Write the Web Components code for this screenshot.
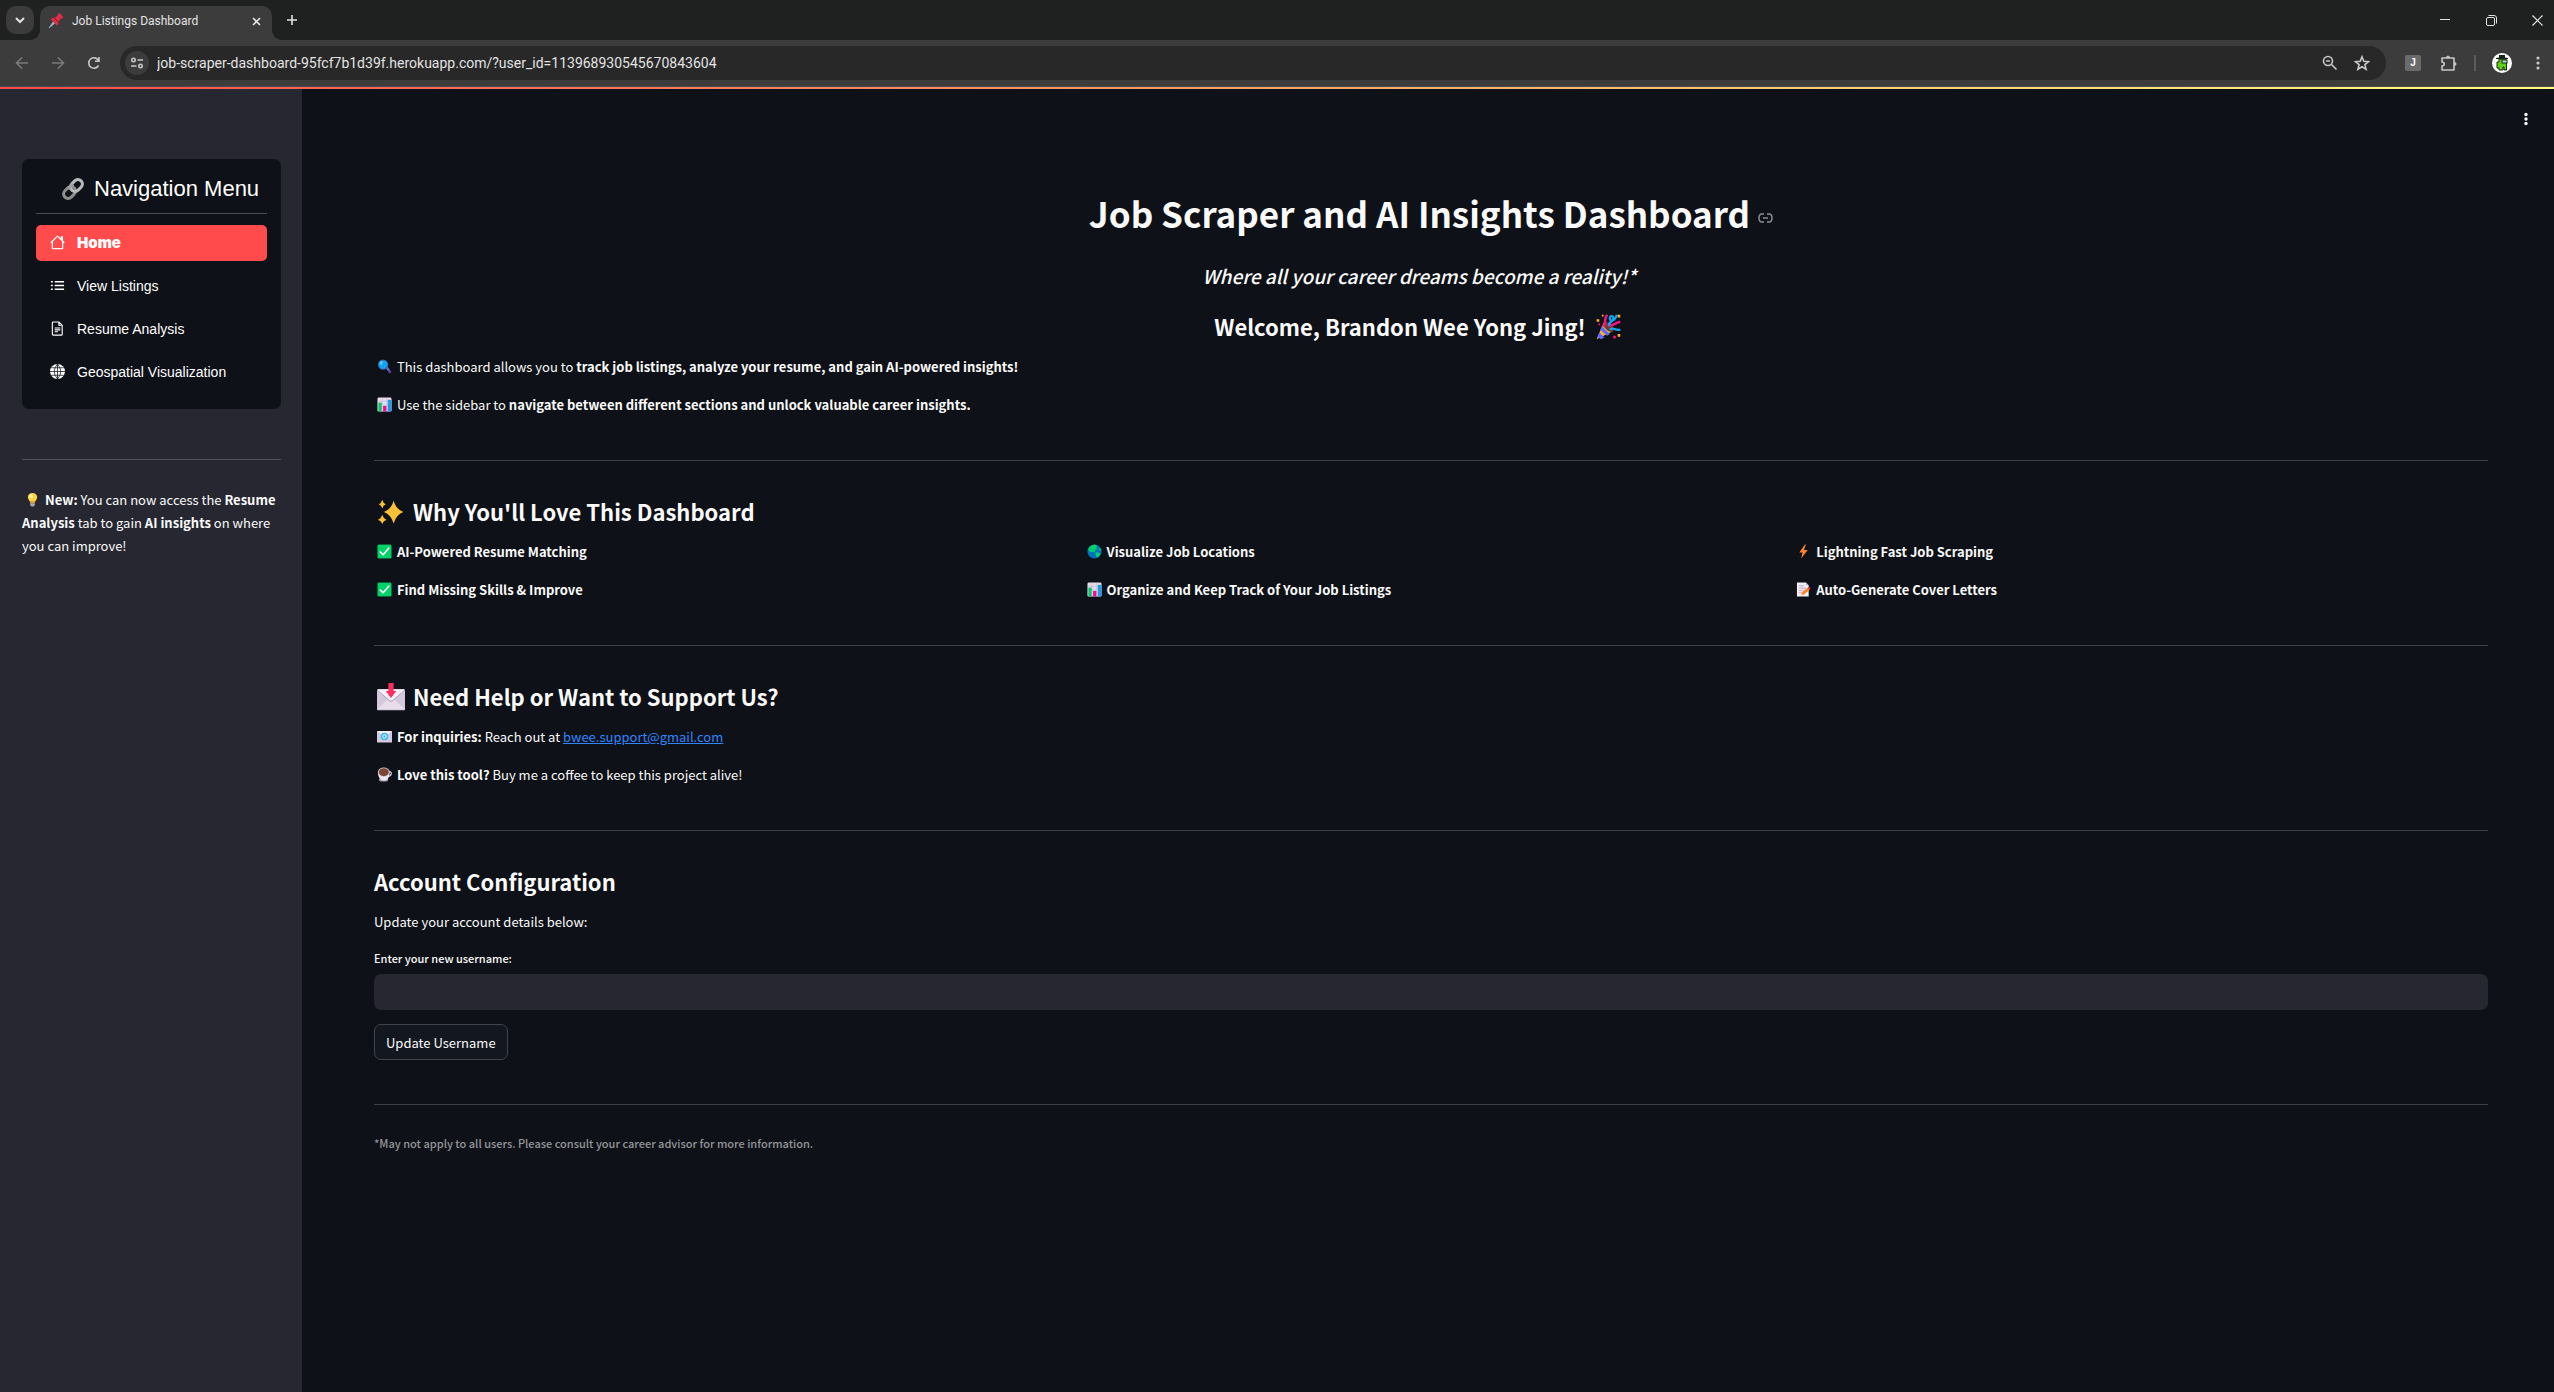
<!DOCTYPE html>
<html lang="en">
<head>
<meta charset="utf-8">
<title>Job Listings Dashboard</title>
<style>
html, body { margin: 0; height: 100%; }
body {
  background: #0e1117; color: #fafafa;
  font: 400 13px/23px "Noto Sans CJK SC", "Noto Sans", sans-serif;
  --ui: Roboto, "Noto Sans", sans-serif;
  --panel: #262730; --ink: #0e1117; --accent: #ff4b4b;
}
app-shell a { color: #2f86ff; }
</style>
</head>
<body>
<app-shell>
  <browser-tabs slot="chrome" label="Job Listings Dashboard"></browser-tabs>
  <browser-toolbar slot="chrome" url="job-scraper-dashboard-95fcf7b1d39f.herokuapp.com/?user_id=113968930545670843604"></browser-toolbar>

  <side-bar slot="side">
    <nav-menu slot="menu" label="Navigation Menu">
      <nav-item icon="house" active>Home</nav-item>
      <nav-item icon="list">View Listings</nav-item>
      <nav-item icon="file">Resume Analysis</nav-item>
      <nav-item icon="globe">Geospatial Visualization</nav-item>
    </nav-menu>
    <emoji-icon name="bulb"></emoji-icon> <b>New:</b> You can now access the <b>Resume Analysis</b> tab to gain <b>AI insights</b> on where you can improve!
  </side-bar>

  <hero-head>
    <span slot="title">Job Scraper and AI Insights Dashboard</span>
    <span slot="tagline">Where all your career dreams become a reality!*</span>
    <span slot="welcome">Welcome, Brandon Wee Yong Jing! <emoji-icon name="party" size="l"></emoji-icon></span>
    <text-line><emoji-icon name="lens"></emoji-icon> This dashboard allows you to <b>track job listings, analyze your resume, and gain AI-powered insights!</b></text-line>
    <text-line><emoji-icon name="chart"></emoji-icon> Use the sidebar to <b>navigate between different sections and unlock valuable career insights.</b></text-line>
  </hero-head>

  <page-section>
    <span slot="title"><emoji-icon name="sparkles" size="l"></emoji-icon> Why You'll Love This Dashboard</span>
    <feature-grid>
      <text-line><emoji-icon name="check"></emoji-icon> <b>AI-Powered Resume Matching</b></text-line>
      <text-line><emoji-icon name="earth"></emoji-icon> <b>Visualize Job Locations</b></text-line>
      <text-line><emoji-icon name="bolt"></emoji-icon> <b>Lightning Fast Job Scraping</b></text-line>
      <text-line><emoji-icon name="check"></emoji-icon> <b>Find Missing Skills &amp; Improve</b></text-line>
      <text-line><emoji-icon name="chart"></emoji-icon> <b>Organize and Keep Track of Your Job Listings</b></text-line>
      <text-line><emoji-icon name="memo"></emoji-icon> <b>Auto-Generate Cover Letters</b></text-line>
    </feature-grid>
  </page-section>

  <page-section>
    <span slot="title"><emoji-icon name="inbox" size="l"></emoji-icon> Need Help or Want to Support Us?</span>
    <text-line><emoji-icon name="email"></emoji-icon> <b>For inquiries:</b> Reach out at <a href="mailto:bwee.support@gmail.com">bwee.support@gmail.com</a></text-line>
    <text-line><emoji-icon name="coffee"></emoji-icon> <b>Love this tool?</b> Buy me a coffee to keep this project alive!</text-line>
  </page-section>

  <page-section>
    <span slot="title">Account Configuration</span>
    <text-line>Update your account details below:</text-line>
    <username-form></username-form>
  </page-section>

  <page-footnote>*May not apply to all users. Please consult your career advisor for more information.</page-footnote>
</app-shell>

<script>
const define = (name, render) => customElements.define(name, class extends HTMLElement {
  constructor() { super(); this.attachShadow({ mode: "open" }); }
  connectedCallback() { this.shadowRoot.innerHTML = render(this); }
});

const EMOJI = {
  bulb: `<path d="M16 2c-6 0-10 4-10 9 0 4 3 6 4.500 10h11c1.500-4 4.500-6 4.500-10 0-5-4-9-10-9z" fill="#ffd23f"/><ellipse cx="13" cy="9" rx="4" ry="5" fill="#fff0a0"/><path d="M11 21h10v3H11z" fill="#f0a33a"/><path d="M11 24h10v4l-3 3h-4l-3-3z" fill="#a9a7b5"/>`,
  party: `<path d="M3 30 11 11c5 1 9 5 10 10z" fill="#ffb02e"/><path d="m6 22 6 6-4 2-4-3zM9 15l9 9-3 2-8-7z" fill="#5a6cff"/><ellipse cx="17" cy="16" rx="7" ry="4" transform="rotate(45 17 16)" fill="#6b3a2c"/><path d="M11 16c3-4 0-9 4-14M17 14c5 1 7-3 13-4" fill="none" stroke="#f5117e" stroke-width="3"/><path d="M17 15c-1-5 4-4 5-8s-4-5-4-1 6 4 8-4M18 19c4-4 6 2 12 0" fill="none" stroke="#12a5f4" stroke-width="2.600"/><path d="M3 7h3v3H3zM27 24h3v3h-3zM27 2h3v3h-3zM9 2h2v2H9z" fill="#ffb02e"/><path d="M5 12h2v2H5zM22 26h3v3h-3z" fill="#f5117e"/>`,
  lens: `<path d="m19 20 4-3 7 9c2 3-3 6-5 3z" fill="#534ba4"/><path d="m20 19 3-2 4 6-4 2z" fill="#8368b5"/><circle cx="13" cy="12" r="11" fill="#2c6db5"/><circle cx="13" cy="12" r="9" fill="#10a5f4"/><ellipse cx="9" cy="8" rx="3" ry="4" fill="#6bd0ff"/>`,
  chart: `<rect x="1" y="1" width="30" height="30" rx="3" fill="#e6dcea"/><path d="M1 9h30M1 17h30M1 24h30M11 1v30M21 1v30" stroke="#bba9c9" stroke-width="1"/><path d="M3 12h7v19H3z" fill="#00c868"/><path d="M13 19h7v12h-7z" fill="#f70a8d"/><path d="M23 6h7v25h-7z" fill="#14a0f0"/>`,
  sparkles: `<path d="M19 3q3 10 11 13-8 3-11 13-3-10-11-13 8-3 11-13zM6 2q1 4 4 5-3 1-4 5-1-4-4-5 3-1 4-5zM6 19q1 4 5 6-4 1-5 5-1-4-5-5 4-2 5-6z" fill="#fbc136"/>`,
  check: `<rect x="1" y="1" width="30" height="30" rx="3" fill="#06b85b"/><rect x="2" y="2" width="28" height="28" rx="2" fill="#00d26a"/><path d="m7 17 6 6L25 9" fill="none" stroke="#fff" stroke-width="3.500" stroke-linecap="round" stroke-linejoin="round"/>`,
  earth: `<circle cx="16" cy="16" r="15" fill="#0074ba"/><path d="M8 4c7-4 12-2 14 1l-3 2 3 3-5 4-1 4-5-2-5 1-3-5c0-3 2-6 5-8zM18 18l7 0 4 3c-2 4-5 7-8 8l-2-6zM25 8l4 2 1 5-4-3z" fill="#00d26a"/>`,
  bolt: `<path d="M19 1 7 18h7l-3 13 14-18h-8l4-12z" fill="#ff822d"/>`,
  memo: `<path d="M2 1h19l6 6v24H2z" fill="#f3eef8"/><path d="M21 1v6h6z" fill="#c0aed1"/><path d="M6 8h11M6 13h16M6 18h8M6 23h4" stroke="#b4a5c4" stroke-width="2"/><path d="m10 28 2-6 13-10 4 5-13 10z" fill="#ff822d"/><path d="m25 12 2-1c2-1 5 3 3 4l-2 2z" fill="#f8312f"/><path d="m10 28 2-5 3 4z" fill="#ffce7c"/>`,
  inbox: `<rect x="0" y="7" width="32" height="24" rx="1" fill="#d3c8dc"/><path d="m0 30 13-12h6l13 12z" fill="#e6dcea"/><path d="M1 7h30v3L18 20c-1 1-3 1-4 0L1 10z" fill="#f4eff8"/><path d="m0 8 14 12c1 1 3 1 4 0L32 8" fill="none" stroke="#998ea4" stroke-width="1"/><path d="M13 0h6v9h3l-6 8-6-8h3z" fill="#f92f60"/>`,
  email: `<rect y="4" width="32" height="25" rx="1" fill="#d5cadd"/><path d="M1 4h30L18 17c-1 1-3 1-4 0z" fill="#f4eff8"/><circle cx="16" cy="16" r="8" fill="#26b5f3"/><circle cx="16" cy="16" r="3" fill="none" stroke="#fff" stroke-width="1.500"/><path d="M19 14v4c1 2 3 0 2-3a5 5 0 1 0-3 6" fill="none" stroke="#fff" stroke-width="1"/>`,
  coffee: `<ellipse cx="14" cy="27" rx="10" ry="4" fill="#a99bb3"/><path d="M26 10c7-1 6 10-3 10" fill="none" stroke="#d9d2df" stroke-width="2.500"/><path d="M2 10h25c0 12-4 19-12 19S2 22 2 10z" fill="#ece7f0"/><ellipse cx="14.500" cy="11" rx="12.500" ry="10" fill="#d3c9da"/><ellipse cx="14.500" cy="11" rx="10.500" ry="8.500" fill="#7d4533"/>`,
  chain: `<g fill="none" stroke-width="4.500"><rect x="-9.500" y="-6.500" width="19" height="13" rx="6.500" transform="translate(11 21) rotate(-45)" stroke="#8e8e8e"/><rect x="-9.500" y="-6.500" width="19" height="13" rx="6.500" transform="translate(21 11) rotate(-45)" stroke="#b9b9b9"/><path d="m9 16 7-7" stroke="#a2a2a2"/></g>`,
  pin: `<path d="m2 30 8-12 3 3z" fill="#9fb3c8" stroke="#9fb3c8" stroke-width="1.500"/><path d="M20 1c3-2 11 5 10 9l-4 1-5 6c1 4-1 7-3 8L6 13c1-3 4-4 8-3l6-6z" fill="#dd2e44"/><path d="m13 11 8 7" stroke="#a0041e" stroke-width="2"/>`
};
define("emoji-icon", el => `
<style>
:host { display: inline-block; width: 15px; height: 15px; margin: 0 2px 0 3px; vertical-align: -2px; }
:host([size="l"]) { width: 28px; height: 28px; margin: 0 3px; vertical-align: -5px; }
:host([size="s"]) { width: 16px; height: 16px; margin: 0; vertical-align: middle; }
:host([size="m"]) { width: 22px; height: 22px; margin: 0; }
svg { display: block; width: 100%; height: 100%; overflow: visible; }
</style>
<svg viewBox="0 0 32 32" aria-hidden="true">${EMOJI[el.getAttribute("name")]}</svg>`);

define("app-shell", () => `
<style>
:host { display: flex; flex-direction: column; min-height: 100vh; }
.accent { height: 2px; background: linear-gradient(90deg, #ff4b4b, #fffd80); }
.body { display: flex; flex: 1; }
main { flex: 1; min-width: 0; box-sizing: border-box; padding: 22px 66px 60px 72px; }
.bar { display: flex; justify-content: flex-end; align-items: flex-start; height: 78px; margin-right: -48px; }
.bar button { width: 20px; height: 16px; padding: 0; border: 0; background: none; }
svg { display: block; margin: 0 auto; fill: #fafafa; }
</style>
<header><slot name="chrome"></slot></header>
<div class="accent"></div>
<div class="body">
  <slot name="side"></slot>
  <main>
    <div class="bar"><button aria-label="Main menu"><svg width="4" height="16"><circle cx="2" cy="3.500" r="1.700"/><circle cx="2" cy="8" r="1.700"/><circle cx="2" cy="12.500" r="1.700"/></svg></button></div>
    <slot></slot>
  </main>
</div>`);

define("browser-tabs", el => `
<style>
:host { display: flex; align-items: center; justify-content: space-between; box-sizing: border-box; height: 40px; padding: 0 6px; background: #1f2020; font: 12px/16px var(--ui); color: #e3e3e3; }
.left { display: flex; align-items: flex-end; align-self: stretch; }
button { display: grid; place-items: center; padding: 0; border: 0; background: none; color: inherit; }
.search { width: 28px; height: 28px; margin: 6px 6px 6px 0; border-radius: 10px; background: #3c3c3c; }
.tab { position: relative; display: flex; align-items: center; gap: 8px; box-sizing: border-box; width: 232px; height: 34px; padding: 0 8px 4px; border-radius: 10px 10px 0 0; background: #3c3c3c; }
.tab::before, .tab::after { content: ""; position: absolute; bottom: 0; width: 10px; height: 10px; }
.tab::before { right: 100%; background: radial-gradient(circle at 0 0, #0000 10px, #3c3c3c 10px); }
.tab::after { left: 100%; background: radial-gradient(circle at 100% 0, #0000 10px, #3c3c3c 10px); }
.tab span { flex: 1; white-space: nowrap; }
.tab button { width: 16px; height: 16px; }
.add { width: 28px; height: 28px; margin: 0 0 6px 6px; }
.win { display: flex; margin-right: -12px; }
.win button { width: 46px; height: 38px; }
svg { fill: none; stroke: currentColor; }
</style>
<div class="left">
  <button class="search" aria-label="Search tabs"><svg width="10" height="8" stroke-width="2"><path d="m1 2 4 4 4-4"/></svg></button>
  <div class="tab"><emoji-icon name="pin" size="s"></emoji-icon><span>${el.getAttribute("label")}</span>
    <button aria-label="Close tab"><svg width="9" height="9" stroke-width="1.600"><path d="m1 1 7 7m0-7L1 8"/></svg></button></div>
  <button class="add" aria-label="New tab"><svg width="12" height="12" stroke-width="1.600"><path d="M6 1v10M1 6h10"/></svg></button>
</div>
<div class="win">
  <button aria-label="Minimize"><svg width="10" height="10"><path d="M0 4.500h10"/></svg></button>
  <button aria-label="Restore"><svg width="11" height="11"><rect x=".5" y="2.500" width="8" height="8" rx="1.500"/><path d="M2.500.5H8Q10.500.5 10.500 3v5.500"/></svg></button>
  <button aria-label="Close"><svg width="11" height="11" stroke-width="1.200"><path d="m.5.500 10 10m0-10-10 10"/></svg></button>
</div>`);

define("browser-toolbar", el => `
<style>
:host { display: flex; align-items: center; box-sizing: border-box; height: 47px; padding: 0 0 1px 4px; background: #3c3c3c; border-bottom: 1px solid #4a4a4a; color: #c7c7c7; }
button { display: grid; place-items: center; width: 36px; height: 34px; padding: 0; border: 0; background: none; color: inherit; }
button[disabled] { color: #7a7a7a; }
.url { display: flex; align-items: center; flex: 1; box-sizing: border-box; height: 34px; margin: 0 9px 0 8px; padding: 0 8px 0 5px; border-radius: 17px; background: #282828; }
.url .site { width: 24px; height: 24px; border-radius: 12px; background: #3c3c3c; }
.url button { width: 32px; }
input { flex: 1; margin: 0 0 0 8px; padding: 0; border: 0; outline: 0; font: 14px/20px var(--ui); color: #e3e3e3; background: none; }
.j { display: grid; place-items: center; width: 16px; height: 16px; border-radius: 2px; background: #6b6b6b; color: #fff; font: 700 10px/16px "Liberation Sans", sans-serif; }
hr { width: 2px; height: 16px; margin: 0 6px 0 7px; border: 0; background: #5c5c5c; }
.profile { width: 40px; }
.menu { width: 32px; }
svg { fill: none; stroke: currentColor; stroke-width: 1.600; }
.dots { fill: currentColor; stroke: none; }
</style>
<button disabled aria-label="Back"><svg width="14" height="14"><path d="M13 7H2m5-5.500L1.500 7 7 12.500"/></svg></button>
<button disabled aria-label="Forward"><svg width="14" height="14"><path d="M1 7h11M7 1.500 12.500 7 7 12.500"/></svg></button>
<button aria-label="Reload"><svg width="14" height="14" stroke-width="1.800"><path d="M11.500 9.500a5.200 5.200 0 1 1 0-5M12 1v4.200H8"/></svg></button>
<div class="url">
  <button class="site" aria-label="Site information"><svg width="14" height="12"><circle cx="3.500" cy="3" r="1.700"/><path d="M7.500 3H13M1 9h5.500"/><circle cx="10.500" cy="9" r="1.700"/></svg></button>
  <input aria-label="Address" value="${el.getAttribute("url")}">
  <button aria-label="Zoom"><svg width="16" height="16"><circle cx="6" cy="6" r="4.500"/><path d="m9.500 9.500 5 5M4 6h4"/></svg></button>
  <button aria-label="Bookmark"><svg width="16" height="16" stroke-width="1.500"><path d="m8 1.800 1.800 4.400 4.700.4-3.600 3 1.200 4.600L8 11.700l-4.100 2.500 1.200-4.600-3.600-3 4.700-.4z"/></svg></button>
</div>
<button aria-label="Extension J"><span class="j">J</span></button>
<button aria-label="Extensions"><svg width="18" height="18"><path d="M2 4h12v12H2v-4q2.300-.3 2.300-2T2 8z" stroke-linejoin="round"/><path d="M6 4a2 2.500 0 0 1 4 0zM14 8a2.500 2 0 0 1 0 4z" fill="currentColor" stroke="none"/></svg></button>
<hr>
<button class="profile" aria-label="Profile"><svg width="20" height="20"><circle cx="10" cy="10" r="10" fill="#fff" stroke="none"/><path d="M7 6h6q1.500 0 1.500 2v9H12v-3h-1v3H7v-2H5V9h2z" fill="#5fd013" stroke="#182b0c" stroke-width="1"/><rect x="10" y="7" width="5" height="3" fill="#b9dce0" stroke="#182b0c" stroke-width="1"/><path d="M4 6h12V5l-3-.5V2H7v2.500L4 5z" fill="#14251a" stroke="none"/></svg></button>
<button class="menu" aria-label="Browser menu"><svg class="dots" width="4" height="14"><circle cx="2" cy="2" r="1.600"/><circle cx="2" cy="7" r="1.600"/><circle cx="2" cy="12" r="1.600"/></svg></button>`);

define("side-bar", () => `
<style>
:host { display: block; flex: none; box-sizing: border-box; width: 302px; padding: 70px 21px 40px 22px; background: var(--panel); }
hr { height: 1px; margin: 50px 0 28px; border: 0; background: #51525a; }
</style>
<slot name="menu"></slot><hr><div><slot></slot></div>`);

define("nav-menu", el => `
<style>
:host { display: block; padding: 15px 14px 19px; border-radius: 7px; background: var(--ink); font-family: "Liberation Sans", Arial, sans-serif; color: #fff; }
h2 { display: flex; align-items: center; gap: 10px; margin: 0; padding: 0 0 9px 26px; border-bottom: 1px solid #4a4c50; font: 400 22px/30px "Liberation Sans", sans-serif; white-space: nowrap; }
nav { display: flex; flex-direction: column; gap: 7px; margin-top: 11px; }
</style>
<h2><emoji-icon name="chain" size="m"></emoji-icon>${el.getAttribute("label")}</h2>
<nav><slot></slot></nav>`);

const NAV = {
  house: `<path d="M2.500 7v7.500h11V7M.8 8.300 8 1.200l7.200 7.100M12 5V2h1.200v4" fill="none" stroke="currentColor" stroke-width="1.300" stroke-linejoin="round"/>`,
  list: `<path d="M5 4h10M5 8h10M5 12h10M1 4h2M1 8h2M1 12h2" fill="none" stroke="currentColor" stroke-width="1.500"/>`,
  file: `<path d="M3.500 1h6L13 4.500V14q0 1-1 1H3.500q-1 0-1-1V2q0-1 1-1zM9.500 1v3.500H13M5 7.500h6M5 9.500h6M5 11.500h3.500" fill="none" stroke="currentColor" stroke-width="1.200"/>`,
  globe: `<circle cx="8" cy="8" r="8" fill="currentColor"/><path d="M8 0v16M0 8h16M1.500 4h13M1.500 12h13M8 0q-7 8 0 16M8 0q7 8 0 16" fill="none" stroke="#0e1117" stroke-width=".8"/>`
};
define("nav-item", el => `
<style>
:host { display: block; }
a { display: flex; align-items: center; gap: 12px; box-sizing: border-box; height: 36px; padding: 0 14px 1px; border-radius: 5px; color: inherit; font-size: 14px; line-height: 20px; text-decoration: none; }
:host([active]) a { background: var(--accent); font-family: Inter, sans-serif; font-size: 15px; font-weight: 900; }
svg { flex: none; width: 15px; height: 15px; overflow: visible; }
</style>
<a href="#"><svg viewBox="0 0 16 16" aria-hidden="true">${NAV[el.getAttribute("icon")]}</svg><span><slot></slot></span></a>`);

define("text-line", () => `
<style>:host { display: block; } p { margin: 0; }</style><p><slot></slot></p>`);

define("hero-head", () => `
<style>
:host { display: flex; flex-direction: column; }
h1, h2, h3 { display: flex; align-items: center; justify-content: center; gap: 8px; margin: 0; }
h1 { font-size: 35px; line-height: 48px; }
h2 { margin-top: 23px; font-size: 19px; line-height: 32px; font-style: italic; font-weight: 500; }
h3 { margin: 18px 0 13px; font-size: 22px; line-height: 32px; font-weight: 600; }
.anchor { width: 15px; height: 10px; }
h1 .anchor { padding-top: 10px; }
.text { display: flex; flex-direction: column; gap: 15px; }
svg { display: block; fill: none; stroke: #8b8d92; stroke-width: 1.500; }
</style>
<h1><slot name="title"></slot><a class="anchor" href="#top" aria-label="Link to heading"><svg width="15" height="10"><path d="M6 1H4Q1 1 1 5t3 4h2M9 1h2q3 0 3 4t-3 4H9M5 5h5"/></svg></a></h1>
<h2><slot name="tagline"></slot><i class="anchor"></i></h2>
<h3><slot name="welcome"></slot><i class="anchor"></i></h3>
<div class="text"><slot></slot></div>`);

define("page-section", () => `
<style>
:host { display: block; margin-top: 44px; padding-top: 34px; border-top: 1px solid #3d4044; }
h3 { margin: 0 0 13px; font-size: 22px; line-height: 32px; font-weight: 600; }
div { display: flex; flex-direction: column; gap: 15px; }
</style>
<h3><slot name="title"></slot></h3><div><slot></slot></div>`);

define("feature-grid", () => `
<style>:host { display: grid; grid-template-columns: repeat(3, minmax(0, 1fr)); gap: 15px; }</style><slot></slot>`);

define("username-form", () => `
<style>
form { display: flex; flex-direction: column; align-items: flex-start; }
label { font-size: 11px; line-height: 20px; margin: 0 0 6px; font-weight: 500; }
input { box-sizing: border-box; width: 100%; height: 36px; margin: 0 0 14px; padding: 0 12px; border: 0; border-radius: 7px; background: var(--panel); color: inherit; font: inherit; }
button { box-sizing: border-box; height: 36px; padding: 0 11px; border: 1px solid #41444b; border-radius: 7px; background: #131720; color: inherit; font: inherit; }
</style>
<form><label for="username">Enter your new username:</label><input id="username" type="text"><button type="button">Update Username</button></form>`);

define("page-footnote", () => `
<style>
:host { display: block; margin-top: 44px; padding-top: 27px; border-top: 1px solid #3d4044; color: #94969a; font-size: 11px; line-height: 23px; font-weight: 500; }
</style>
<slot></slot>`);
</script>
</body>
</html>
